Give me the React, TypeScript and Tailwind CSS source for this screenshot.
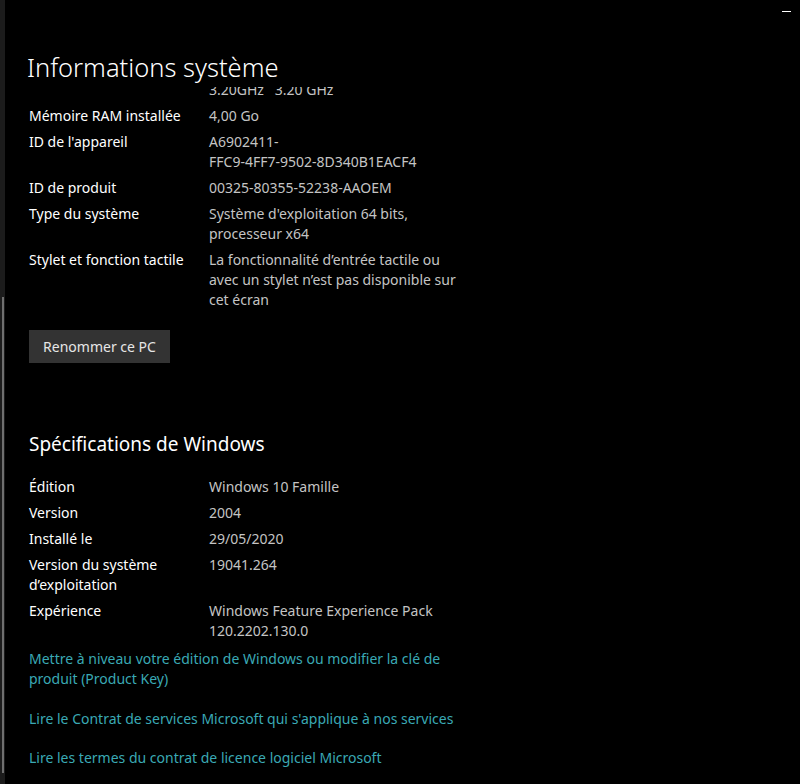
import React from 'react'

const font = { fontFamily: '"Noto Sans", "Open Sans", sans-serif' }

function Row({ label, value }: { label: React.ReactNode; value: React.ReactNode }) {
  return (
    <div className="flex">
      <div className="w-[180px] shrink-0 text-white">{label}</div>
      <div className="w-[252px] text-[#c4c4c4]">{value}</div>
    </div>
  )
}

export default function App() {
  return (
    <div className="relative w-[800px] h-[784px] bg-black overflow-hidden text-[14px] leading-[20px]" style={font}>
      {/* left scroll strip */}
      <div className="absolute left-0 top-0 h-full w-[5px] bg-[#1c1c1c]">
        <div className="absolute left-[2px] top-[297px] h-[476px] w-[2px] bg-[#6f6f6f]" />
      </div>
      {/* minimize */}
      <div className="absolute left-[782px] top-[11px] w-[9px] h-[1px] bg-white" />

      <div className="pl-[29px]">
        <h1 className="pt-[50px] h-[85px] -ml-[2px] text-[25.5px] leading-[34px] font-light text-white">
          Informations système
        </h1>

        <div className="flex flex-col gap-[6px]">
          {/* row scrolled under the header */}
          <div className="h-[15px] pt-[2px]">
            <div className="h-[13px] overflow-hidden">
              <div className="-mt-[7px] ml-[180px] text-[#c4c4c4]">3.20GHz &nbsp; 3.20 GHz</div>
            </div>
          </div>
          <Row label="Mémoire RAM installée" value="4,00 Go" />
          <Row label="ID de l'appareil" value={<>A6902411-<br />FFC9-4FF7-9502-8D340B1EACF4</>} />
          <Row label="ID de produit" value="00325-80355-52238-AAOEM" />
          <Row label="Type du système" value={<>Système d'exploitation 64 bits,<br />processeur x64</>} />
          <Row
            label="Stylet et fonction tactile"
            value="La fonctionnalité d’entrée tactile ou avec un stylet n’est pas disponible sur cet écran"
          />
        </div>

        <button className="mt-[20px] w-[141px] h-[33px] bg-[#333333] text-[#e6e6e6] text-[14px]">
          Renommer ce PC
        </button>

        <h2 className="mt-[67px] text-[19px] leading-[28px] text-white">Spécifications de Windows</h2>

        <div className="mt-[19px] flex flex-col gap-[6px]">
          <Row label="Édition" value="Windows 10 Famille" />
          <Row label="Version" value="2004" />
          <Row label="Installé le" value="29/05/2020" />
          <Row label={<>Version du système<br />d’exploitation</>} value="19041.264" />
          <Row label="Expérience" value={<>Windows Feature Experience Pack<br />120.2202.130.0</>} />
        </div>

        <div className="mt-[8px] flex flex-col text-[#3aa9b4]">
          <a className="w-[430px]">Mettre à niveau votre édition de Windows ou modifier la clé de produit (Product Key)</a>
          <a className="mt-[20px]">Lire le Contrat de services Microsoft qui s'applique à nos services</a>
          <a className="mt-[19px]">Lire les termes du contrat de licence logiciel Microsoft</a>
        </div>
      </div>
    </div>
  )
}
